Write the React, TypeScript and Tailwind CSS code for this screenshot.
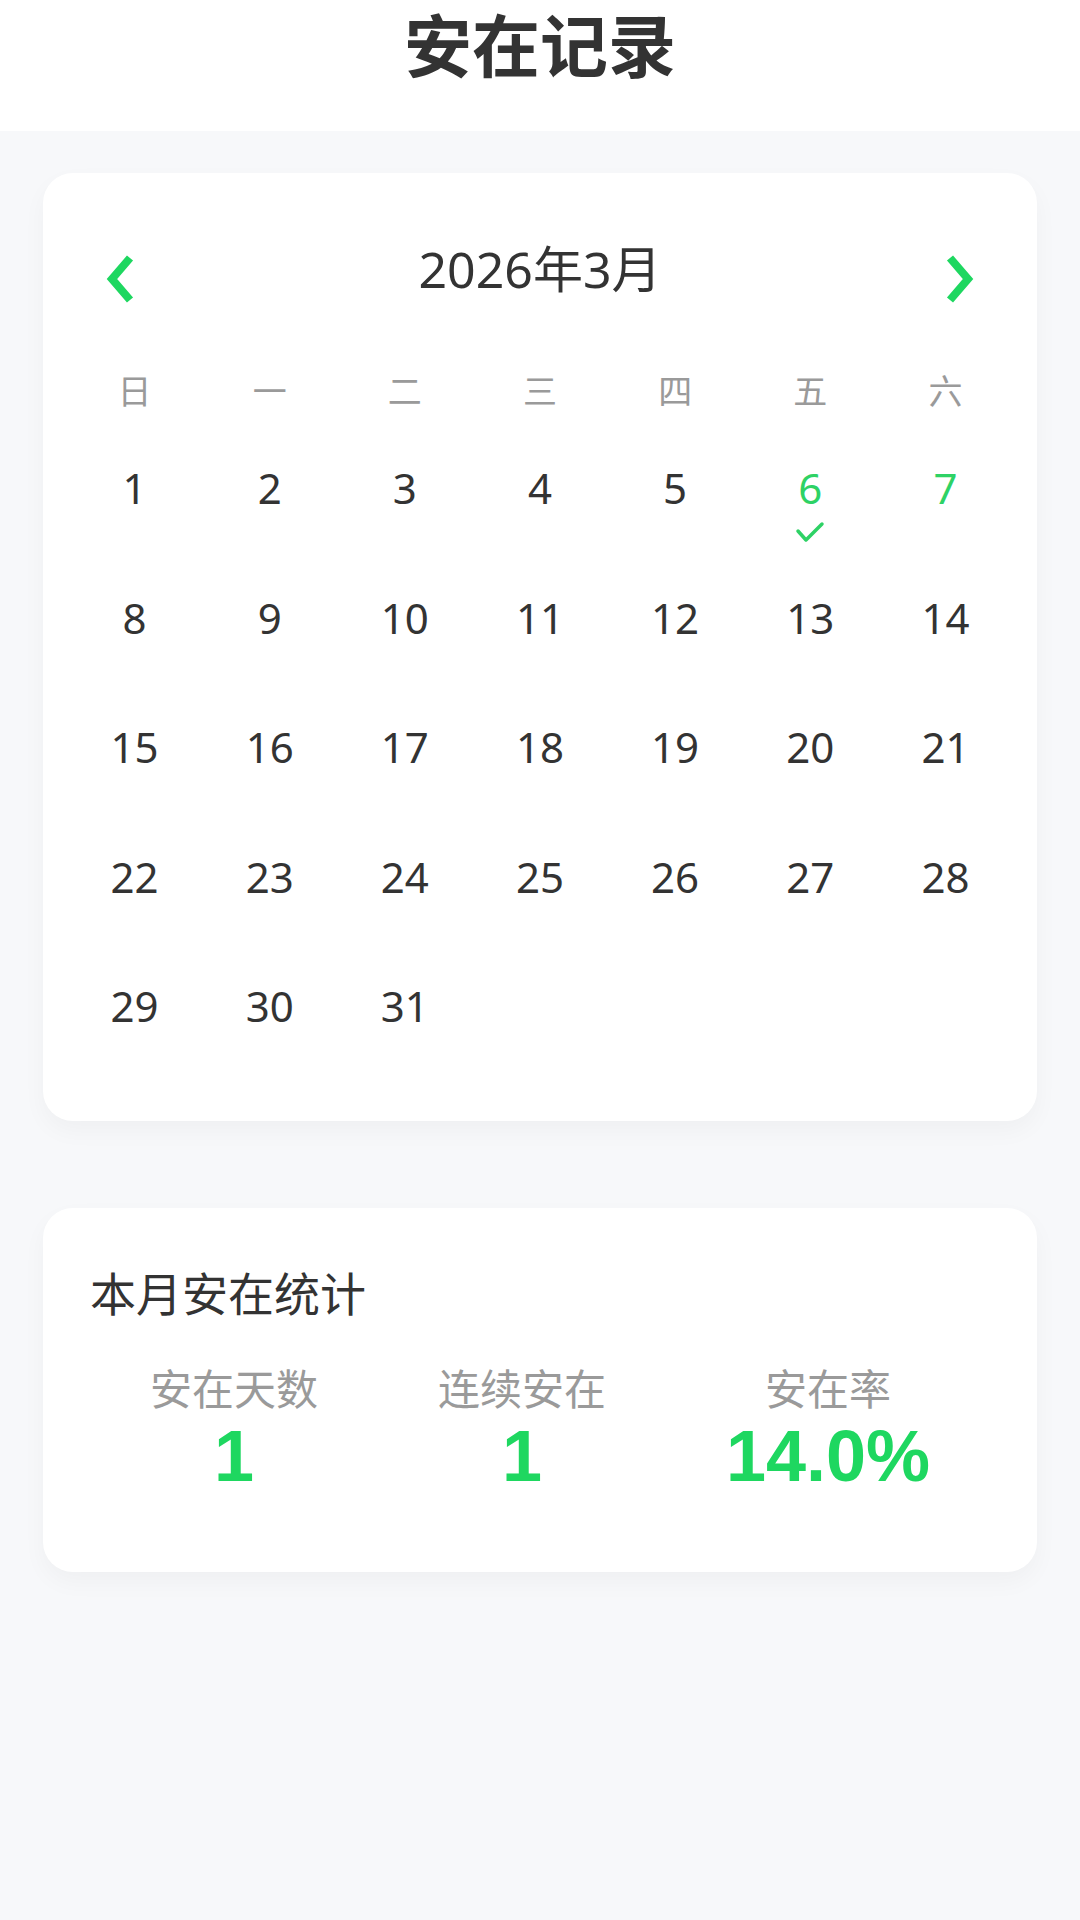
import React from 'react';

const weekDays = ["日", "一", "二", "三", "四", "五", "六"];

const stats = [
  { label: "安在天数", value: "1" },
  { label: "连续安在", value: "1" },
  { label: "安在率", value: "14.0%" },
];

const ChevronLeft = () => (
  <svg width="30" height="48" viewBox="0 0 30 48" fill="none">
    <polyline points="26,3 8,24 26,45" stroke="#1ed760" strokeWidth="8" strokeLinejoin="miter" />
  </svg>
);

const ChevronRight = () => (
  <svg width="30" height="48" viewBox="0 0 30 48" fill="none">
    <polyline points="4,3 22,24 4,45" stroke="#1ed760" strokeWidth="8" strokeLinejoin="miter" />
  </svg>
);

const Check = () => (
  <svg width="30" height="24" viewBox="0 0 30 24" fill="none">
    <polyline points="3,11 11,20 27,4" stroke="#2ed265" strokeWidth="3.5" strokeLinecap="round" strokeLinejoin="round" />
  </svg>
);

const App = () => {
  const days = Array.from({ length: 31 }, (_, i) => i + 1);

  return (
    <div className="min-h-[1920px] bg-[#f7f8fa] font-['Noto_Sans','Noto_Sans_CJK_SC',sans-serif]">
      {/* top bar */}
      <div className="h-[131px] bg-white">
        <h1 className="text-center text-[68px] font-bold leading-[92px] text-[#333333]">安在记录</h1>
      </div>

      {/* calendar card */}
      <div className="mx-[43px] mt-[42px] rounded-[30px] bg-white px-[24px] pt-[64px] pb-[11px] shadow-[0_10px_24px_rgba(0,0,0,0.035)]">
        <div className="flex h-[64px] items-center px-[37px]">
          <div className="mt-[19px] flex">
            <ChevronLeft />
          </div>
          <div className="flex-1 text-center text-[50px] leading-[64px] text-[#333333]">2026年3月</div>
          <div className="mt-[19px] flex">
            <ChevronRight />
          </div>
        </div>

        <div className="mt-[70px] grid grid-cols-7">
          {weekDays.map((d) => (
            <div key={d} className="text-center text-[34px] leading-[40px] text-[#9a9a9a]">
              {d}
            </div>
          ))}
        </div>

        <div className="mt-[51px] grid grid-cols-7">
          {days.map((day) => (
            <div key={day} className="flex h-[129.5px] flex-col items-center">
              <span
                className={
                  day === 6 || day === 7
                    ? "text-[42px] leading-[52px] text-[#2ed265]"
                    : "text-[42px] leading-[52px] text-[#333333]"
                }
              >
                {day}
              </span>
              {day === 6 && (
                <div className="mt-[6px] flex">
                  <Check />
                </div>
              )}
            </div>
          ))}
        </div>
      </div>

      {/* monthly stats card */}
      <div className="mx-[43px] mt-[87px] rounded-[30px] bg-white px-[47px] pt-[53px] pb-[76px] shadow-[0_10px_24px_rgba(0,0,0,0.035)]">
        <h2 className="text-[46px] leading-[64px] text-[#333333]">本月安在统计</h2>
        <div className="mt-[42px] flex justify-around">
          {stats.map((s) => (
            <div key={s.label} className="flex flex-col items-center">
              <span className="font-['Liberation_Sans','Noto_Sans_CJK_SC',sans-serif] text-[42px] leading-[48px] text-[#9a9a9a]">
                {s.label}
              </span>
              <span className="mt-[1px] font-['Liberation_Sans',sans-serif] text-[72px] font-bold leading-[80px] text-[#1ed760]">
                {s.value}
              </span>
            </div>
          ))}
        </div>
      </div>
    </div>
  );
};

export default App;
